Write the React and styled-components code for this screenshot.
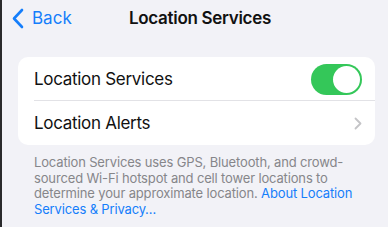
import React from "react";
import styled, { createGlobalStyle } from "styled-components";

const GlobalStyle = createGlobalStyle`
  html, body {
    margin: 0;
    padding: 0;
    background: #f2f2f7;
  }
  body {
    font-family: "Inter", "Liberation Sans", sans-serif;
    -webkit-font-smoothing: antialiased;
  }
`;

const Screen = styled.div`
  width: 388px;
  height: 227px;
  background: #f2f2f7;
  border-left: 2px solid #2a2a2c;
  box-sizing: border-box;
  overflow: hidden;
`;

const NavBar = styled.div`
  display: grid;
  grid-template-columns: 1fr auto 1fr;
  align-items: center;
  height: 36px;
  padding: 0 10px;
`;

const BackButton = styled.div`
  display: flex;
  align-items: center;
  gap: 8px;
  color: #157efb;
  font-size: 17px;
`;

const Title = styled.div`
  font-size: 17px;
  font-weight: 600;
  color: #111;
  letter-spacing: -0.3px;
  margin-left: 10px;
`;

const Card = styled.div`
  margin: 21px 13px 0 16px;
  background: #fff;
  border-radius: 10px;
  overflow: hidden;
`;

const Row = styled.div`
  display: flex;
  align-items: center;
  justify-content: space-between;
  height: 44px;
  padding: 0 13px 0 16px;
  position: relative;
  font-size: 17px;
  color: #111;
  letter-spacing: -0.3px;

  ${(p) =>
    p.$divider &&
    `
    &::after {
      content: "";
      position: absolute;
      left: 16px;
      right: 0;
      bottom: 0;
      height: 1px;
      background: #e2e2e6;
    }
  `}
`;

const Toggle = styled.div`
  width: 51px;
  height: 31px;
  border-radius: 16px;
  background: #34c759;
  position: relative;

  &::after {
    content: "";
    position: absolute;
    right: 2px;
    top: 2px;
    width: 27px;
    height: 27px;
    border-radius: 50%;
    background: #fff;
  }
`;

const Footer = styled.p`
  margin: 10px 20px 0 32px;
  font-size: 13px;
  line-height: 15.7px;
  color: #86868a;
  letter-spacing: -0.15px;
`;

const Link = styled.span`
  color: #157efb;
`;

const App = () => {
  return (
    <Screen>
      <GlobalStyle />
      <NavBar>
        <BackButton>
          <svg width="12" height="21" viewBox="0 0 12 21">
            <path
              d="M10 2 L2 10.5 L10 19"
              fill="none"
              stroke="#157efb"
              strokeWidth="2.6"
              strokeLinecap="round"
              strokeLinejoin="round"
            />
          </svg>
          Back
        </BackButton>
        <Title>Location Services</Title>
        <div />
      </NavBar>
      <Card>
        <Row $divider>
          Location Services
          <Toggle />
        </Row>
        <Row>
          Location Alerts
          <svg width="8" height="13" viewBox="0 0 8 13">
            <path
              d="M1.5 1.5 L6.5 6.5 L1.5 11.5"
              fill="none"
              stroke="#c4c4c7"
              strokeWidth="1.8"
              strokeLinecap="round"
              strokeLinejoin="round"
            />
          </svg>
        </Row>
      </Card>
      <Footer>
        Location Services uses GPS, Bluetooth, and crowd-sourced Wi-Fi hotspot
        and cell tower locations to determine your approximate location.{" "}
        <Link>About Location Services &amp; Privacy…</Link>
      </Footer>
    </Screen>
  );
};

export default App;
